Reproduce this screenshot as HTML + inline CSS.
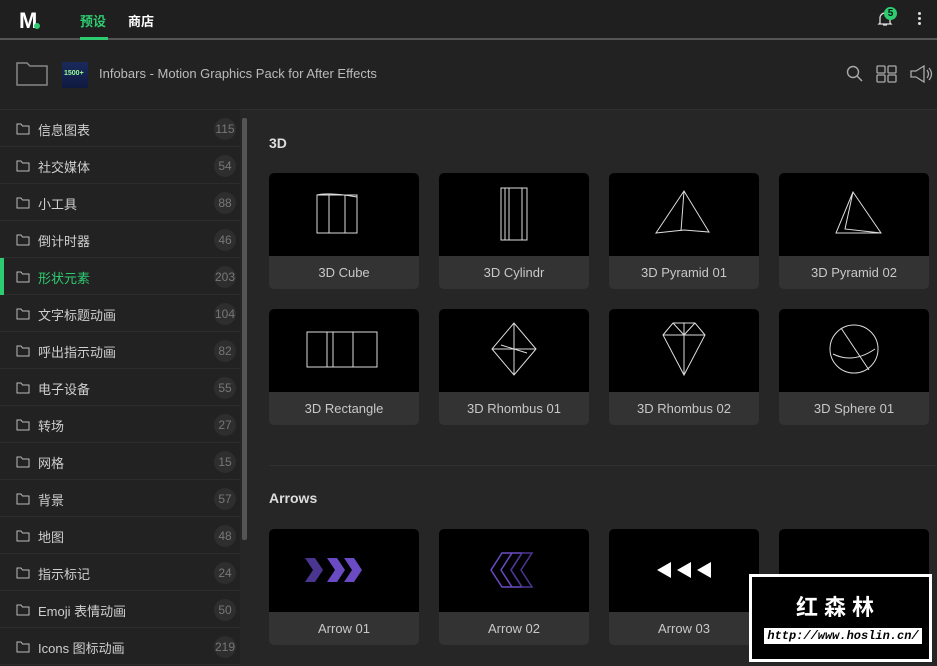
<!DOCTYPE html>
<html><head><meta charset="utf-8"><style>
*{margin:0;padding:0;box-sizing:border-box}
body{width:937px;height:666px;overflow:hidden;background:#262626;font-family:"Liberation Sans","Noto Sans CJK SC",sans-serif;position:relative;color:#ccc}
.abs{position:absolute}
.top{left:0;top:0;width:937px;height:38px;background:#1f1f1f}
.hl{left:0;top:38px;width:937px;height:2px;background:#555}
.hdr{left:0;top:40px;width:937px;height:69px;background:#222}
.side{left:0;top:110px;width:240px;height:556px;background:#222}
.row{position:absolute;left:0;width:240px;height:37px;border-bottom:1px solid #2c2c2c;font-size:13px;color:#cfcfcf}
.row .t{position:absolute;left:38px;top:10px}
.row .n{position:absolute;right:4px;top:8px;width:22px;height:22px;border-radius:11px;background:#2e2e2e;color:#777;font-size:12px;text-align:center;line-height:22px}
.row svg{position:absolute;left:16px;top:13px}
.card{position:absolute;width:150px;height:116px;border-radius:5px;overflow:hidden;background:#333}
.card .img{height:83px;background:#000;position:relative}
.card .l{height:33px;line-height:33px;text-align:center;font-size:13px;color:#c8c8c8}
h3{position:absolute;font-size:14px;color:#ddd;font-weight:bold}
</style></head><body>
<div class="abs top"></div>
<div class="abs hl"></div>
<div class="abs" style="left:80px;top:37px;width:28px;height:3px;background:#2ecc71"></div>
<div class="abs" style="left:19px;top:8px;font-size:22px;font-weight:900;color:#fff;letter-spacing:-1px">M</div>
<div class="abs" style="left:34px;top:23px;width:6px;height:6px;border-radius:3px;background:#2ecc71"></div>
<div class="abs" style="left:80px;top:11px;font-size:13px;font-weight:bold;color:#2ecc71">预设</div>
<div class="abs" style="left:128px;top:11px;font-size:13px;font-weight:bold;color:#fff">商店</div>
<svg class="abs" style="left:876px;top:10px" width="18" height="18" viewBox="0 0 18 18"><path d="M4 13V8a5 5 0 0110 0v5l1 1H3z M7 15h4" fill="none" stroke="#ddd" stroke-width="1.3"/></svg>
<div class="abs" style="left:884px;top:7px;width:13px;height:13px;border-radius:7px;background:#2ecc71;color:#111;font-size:10px;text-align:center;line-height:13px;font-weight:bold">5</div>
<div class="abs" style="left:918px;top:12px;width:3px;height:3px;background:#ddd;box-shadow:0 5px #ddd,0 10px #ddd;border-radius:2px"></div>
<div class="abs hdr"></div>
<svg class="abs" style="left:16px;top:62px" width="32" height="24" viewBox="0 0 32 24"><path d="M1 1h10l3 3h17v19H1z" fill="none" stroke="#888" stroke-width="1.5"/></svg>
<div class="abs" style="left:62px;top:62px;width:26px;height:26px;background:linear-gradient(#1b2a5c,#0f1a40)"><div style="font-size:7px;color:#9f9;font-weight:bold;margin:8px 0 0 2px">1500+</div></div>
<div class="abs" style="left:99px;top:66px;font-size:13px;color:#bbb">Infobars - Motion Graphics Pack for After Effects</div>
<svg class="abs" style="left:846px;top:65px" width="18" height="18" viewBox="0 0 18 18"><circle cx="7" cy="7" r="5.5" fill="none" stroke="#aaa" stroke-width="1.4"/><path d="M11 11l5 5" stroke="#aaa" stroke-width="1.5"/></svg>
<svg class="abs" style="left:876px;top:65px" width="22" height="18" viewBox="0 0 22 18"><g fill="none" stroke="#aaa" stroke-width="1.3"><rect x="1" y="1" width="8" height="7" rx="1"/><rect x="12" y="1" width="8" height="7" rx="1"/><rect x="1" y="10" width="8" height="7" rx="1"/><rect x="12" y="10" width="8" height="7" rx="1"/></g></svg>
<svg class="abs" style="left:910px;top:65px" width="24" height="18" viewBox="0 0 24 18"><path d="M1 6h5l8-5v16l-8-5H1z M17 5q3 4 0 8 M19 3q5 6 0 12" fill="none" stroke="#aaa" stroke-width="1.3"/></svg>
<div class="abs" style="left:0;top:109px;width:937px;height:1px;background:#2e2e2e"></div>
<div class="abs side">
<div class="row" style="top:0"><svg width="14" height="12"><path d="M1 1h4l1.5 2H13v8H1z" fill="none" stroke="#bbb"/></svg><span class="t">信息图表</span><span class="n">115</span></div>
<div class="row" style="top:37px"><svg width="14" height="12"><path d="M1 1h4l1.5 2H13v8H1z" fill="none" stroke="#bbb"/></svg><span class="t">社交媒体</span><span class="n">54</span></div>
<div class="row" style="top:74px"><svg width="14" height="12"><path d="M1 1h4l1.5 2H13v8H1z" fill="none" stroke="#bbb"/></svg><span class="t">小工具</span><span class="n">88</span></div>
<div class="row" style="top:111px"><svg width="14" height="12"><path d="M1 1h4l1.5 2H13v8H1z" fill="none" stroke="#bbb"/></svg><span class="t">倒计时器</span><span class="n">46</span></div>
<div class="row" style="top:148px"><div style="position:absolute;left:0;top:0;width:4px;height:37px;background:#2ecc71"></div><svg width="14" height="12"><path d="M1 1h4l1.5 2H13v8H1z" fill="none" stroke="#bbb"/></svg><span class="t" style="color:#2ecc71">形状元素</span><span class="n">203</span></div>
<div class="row" style="top:185px"><svg width="14" height="12"><path d="M1 1h4l1.5 2H13v8H1z" fill="none" stroke="#bbb"/></svg><span class="t">文字标题动画</span><span class="n">104</span></div>
<div class="row" style="top:222px"><svg width="14" height="12"><path d="M1 1h4l1.5 2H13v8H1z" fill="none" stroke="#bbb"/></svg><span class="t">呼出指示动画</span><span class="n">82</span></div>
<div class="row" style="top:259px"><svg width="14" height="12"><path d="M1 1h4l1.5 2H13v8H1z" fill="none" stroke="#bbb"/></svg><span class="t">电子设备</span><span class="n">55</span></div>
<div class="row" style="top:296px"><svg width="14" height="12"><path d="M1 1h4l1.5 2H13v8H1z" fill="none" stroke="#bbb"/></svg><span class="t">转场</span><span class="n">27</span></div>
<div class="row" style="top:333px"><svg width="14" height="12"><path d="M1 1h4l1.5 2H13v8H1z" fill="none" stroke="#bbb"/></svg><span class="t">网格</span><span class="n">15</span></div>
<div class="row" style="top:370px"><svg width="14" height="12"><path d="M1 1h4l1.5 2H13v8H1z" fill="none" stroke="#bbb"/></svg><span class="t">背景</span><span class="n">57</span></div>
<div class="row" style="top:407px"><svg width="14" height="12"><path d="M1 1h4l1.5 2H13v8H1z" fill="none" stroke="#bbb"/></svg><span class="t">地图</span><span class="n">48</span></div>
<div class="row" style="top:444px"><svg width="14" height="12"><path d="M1 1h4l1.5 2H13v8H1z" fill="none" stroke="#bbb"/></svg><span class="t">指示标记</span><span class="n">24</span></div>
<div class="row" style="top:481px"><svg width="14" height="12"><path d="M1 1h4l1.5 2H13v8H1z" fill="none" stroke="#bbb"/></svg><span class="t">Emoji 表情动画</span><span class="n">50</span></div>
<div class="row" style="top:518px"><svg width="14" height="12"><path d="M1 1h4l1.5 2H13v8H1z" fill="none" stroke="#bbb"/></svg><span class="t">Icons 图标动画</span><span class="n">219</span></div>
</div>
<div class="abs" style="left:242px;top:118px;width:5px;height:422px;background:#555;border-radius:2px"></div>
<h3 style="left:269px;top:135px">3D</h3>
<div class="card" style="left:269px;top:173px"><div class="img"><svg width="150" height="83"><g fill="none" stroke="#ddd" stroke-width="1"><path d="M48 22h40v38H48z M60 22v38 M76 22v38 M88 24v35 M48 22q12-3 40 2"/></g></svg></div><div class="l">3D Cube</div></div>
<div class="card" style="left:439px;top:173px"><div class="img"><svg width="150" height="83"><g fill="none" stroke="#ddd"><path d="M62 15h26v52H62z M66 15v52 M70 15v52 M83 15v52"/></g></svg></div><div class="l">3D Cylindr</div></div>
<div class="card" style="left:609px;top:173px"><div class="img"><svg width="150" height="83"><g fill="none" stroke="#ddd"><path d="M75 18L47 60l28-3 25 2z M75 18l-3 40"/></g></svg></div><div class="l">3D Pyramid 01</div></div>
<div class="card" style="left:779px;top:173px"><div class="img"><svg width="150" height="83"><g fill="none" stroke="#ddd"><path d="M74 19L57 60h45z M74 19l-8 37 36 4"/></g></svg></div><div class="l">3D Pyramid 02</div></div>
<div class="card" style="left:269px;top:309px"><div class="img"><svg width="150" height="83"><g fill="none" stroke="#ddd"><path d="M38 23h70v35H38z M58 23v35 M84 23v35 M64 23v35"/></g></svg></div><div class="l">3D Rectangle</div></div>
<div class="card" style="left:439px;top:309px"><div class="img"><svg width="150" height="83"><g fill="none" stroke="#ddd"><path d="M75 14L53 40l22 26 22-26z M53 40h44 M75 14v52 M62 36l26 8"/></g></svg></div><div class="l">3D Rhombus 01</div></div>
<div class="card" style="left:609px;top:309px"><div class="img"><svg width="150" height="83"><g fill="none" stroke="#ddd"><path d="M64 14h22l10 12-21 40-21-40z M54 26h42 M75 14v52 M64 14l11 12 11-12"/></g></svg></div><div class="l">3D Rhombus 02</div></div>
<div class="card" style="left:779px;top:309px"><div class="img"><svg width="150" height="83"><g fill="none" stroke="#ddd"><circle cx="75" cy="40" r="24"/><path d="M62 19l28 42 M54 45q20 10 42-5"/></g></svg></div><div class="l">3D Sphere 01</div></div>
<div class="abs" style="left:269px;top:465px;width:668px;height:1px;background:#2f2f2f"></div>
<h3 style="left:269px;top:490px">Arrows</h3>
<div class="card" style="left:269px;top:529px"><div class="img"><svg width="150" height="83"><path d="M36 29h10l8 12-8 12H36l8-12z" fill="#4a3590"/><path d="M58 29h10l8 12-8 12H58l8-12z M75 29h10l8 12-8 12H75l8-12z" fill="#6a4bc4"/></svg></div><div class="l">Arrow 01</div></div>
<div class="card" style="left:439px;top:529px"><div class="img"><svg width="150" height="83"><g fill="none" stroke="#6a4bc4" stroke-width="1.5"><path d="M63 24h10L62 41l11 17H63L52 41z M73 24h10L72 41l11 17H73L62 41z" /><path d="M83 24h10L82 41l11 17H83L72 41z" stroke="#4a3590"/></g></svg></div><div class="l">Arrow 02</div></div>
<div class="card" style="left:609px;top:529px"><div class="img"><svg width="150" height="83"><path d="M48 41l14-8v16z M68 41l14-8v16z M88 41l14-8v16z" fill="#fff"/></svg></div><div class="l">Arrow 03</div></div>
<div class="card" style="left:779px;top:529px"><div class="img"></div><div class="l">Arrow 04</div></div>
<div class="abs" style="left:749px;top:574px;width:183px;height:88px;background:#000;border:3px solid #fff"></div>
<div class="abs" style="left:796px;top:590px;font-size:22px;font-weight:bold;color:#fff;letter-spacing:6px">红森林</div>
<div class="abs" style="left:764px;top:628px;width:158px;height:16px;background:#fff;color:#000;font-family:'Liberation Mono',monospace;font-style:italic;font-weight:bold;font-size:12px;line-height:16px;text-align:center">http://www.hoslin.cn/</div>
</body></html>
